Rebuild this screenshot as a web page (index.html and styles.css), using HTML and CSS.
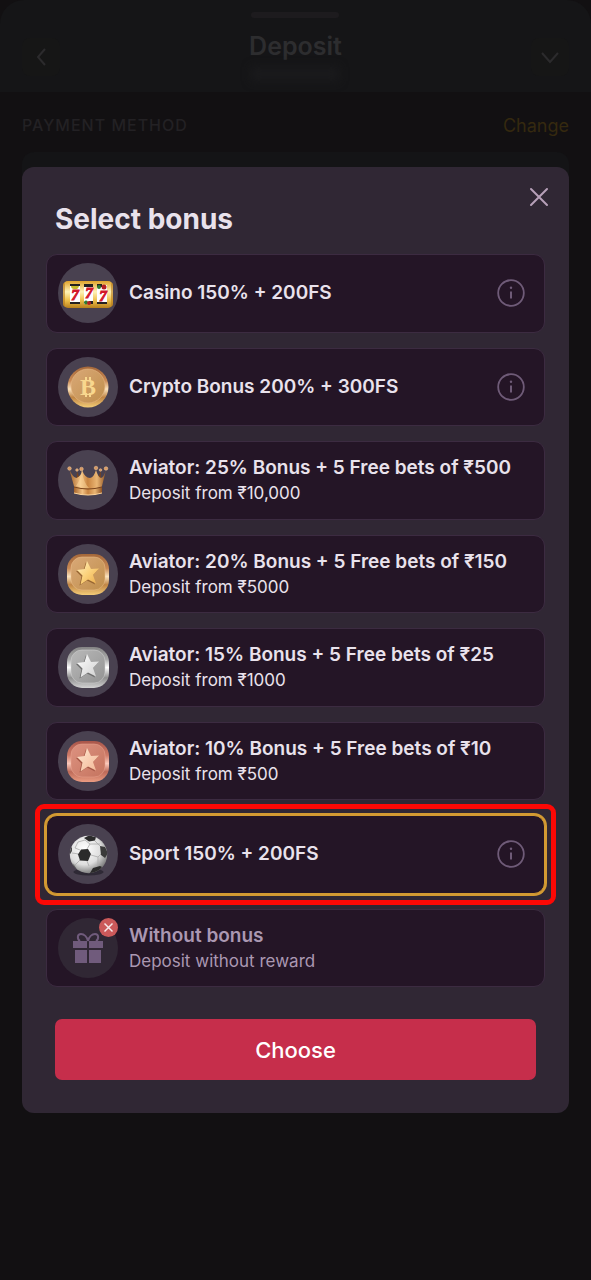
FILE: index.html
```html
<!DOCTYPE html>
<html lang="en">
<head>
    <meta charset="UTF-8">
    <meta name="viewport" content="width=device-width, initial-scale=1.0">
    <title>Deposit</title>
    <link rel="stylesheet" href="styles.css">
</head>
<body>
    <!-- Shared gradients and shapes -->
    <svg class="defs" width="0" height="0" aria-hidden="true">
        <defs>
            <linearGradient id="slotGold" x1="0" y1="0" x2="0" y2="1">
                <stop offset="0" stop-color="#e0a32a"/>
                <stop offset="0.4" stop-color="#fff3b8"/>
                <stop offset="0.7" stop-color="#f0c34e"/>
                <stop offset="1" stop-color="#b8801c"/>
            </linearGradient>
            <linearGradient id="goldRim" x1="0" y1="0" x2="0" y2="1">
                <stop offset="0" stop-color="#a4683a"/>
                <stop offset="0.35" stop-color="#c98a55"/>
                <stop offset="0.55" stop-color="#fbe3bd"/>
                <stop offset="0.75" stop-color="#c08544"/>
                <stop offset="1" stop-color="#f3cd78"/>
            </linearGradient>
            <linearGradient id="goldFace" x1="0" y1="0" x2="1" y2="1">
                <stop offset="0" stop-color="#d9a877"/>
                <stop offset="1" stop-color="#c08f4c"/>
            </linearGradient>
            <linearGradient id="goldStar" x1="0" y1="0" x2="1" y2="1">
                <stop offset="0" stop-color="#fff0c2"/>
                <stop offset="0.5" stop-color="#fbd27c"/>
                <stop offset="1" stop-color="#e9a94a"/>
            </linearGradient>
            <linearGradient id="silverRim" x1="0" y1="0" x2="0" y2="1">
                <stop offset="0" stop-color="#858585"/>
                <stop offset="0.3" stop-color="#a9a9a9"/>
                <stop offset="0.5" stop-color="#ffffff"/>
                <stop offset="0.75" stop-color="#8f8f8f"/>
                <stop offset="1" stop-color="#d2d2d2"/>
            </linearGradient>
            <linearGradient id="silverFace" x1="0" y1="0" x2="1" y2="1">
                <stop offset="0" stop-color="#b9b9b9"/>
                <stop offset="1" stop-color="#939393"/>
            </linearGradient>
            <linearGradient id="silverStar" x1="0" y1="0" x2="1" y2="1">
                <stop offset="0" stop-color="#ffffff"/>
                <stop offset="1" stop-color="#cfcfcf"/>
            </linearGradient>
            <linearGradient id="bronzeRim" x1="0" y1="0" x2="0" y2="1">
                <stop offset="0" stop-color="#a9564a"/>
                <stop offset="0.35" stop-color="#cf7c69"/>
                <stop offset="0.55" stop-color="#fbc9bb"/>
                <stop offset="0.75" stop-color="#bd6a58"/>
                <stop offset="1" stop-color="#ea9c82"/>
            </linearGradient>
            <linearGradient id="bronzeFace" x1="0" y1="0" x2="1" y2="1">
                <stop offset="0" stop-color="#dd9280"/>
                <stop offset="1" stop-color="#c5745f"/>
            </linearGradient>
            <linearGradient id="bronzeStar" x1="0" y1="0" x2="1" y2="1">
                <stop offset="0" stop-color="#ffe6d0"/>
                <stop offset="1" stop-color="#f2b795"/>
            </linearGradient>
            <linearGradient id="crownGold" x1="0" y1="0" x2="1" y2="0">
                <stop offset="0" stop-color="#a4622a"/>
                <stop offset="0.3" stop-color="#f3c284"/>
                <stop offset="0.5" stop-color="#c98440"/>
                <stop offset="0.75" stop-color="#eab674"/>
                <stop offset="1" stop-color="#8e5222"/>
            </linearGradient>
            <radialGradient id="ballShade" cx="0.4" cy="0.35" r="0.65">
                <stop offset="0" stop-color="#ffffff"/>
                <stop offset="0.65" stop-color="#dedede"/>
                <stop offset="1" stop-color="#858585"/>
            </radialGradient>
            <clipPath id="ballClip"><circle cx="30.500" cy="30.500" r="18.700"/></clipPath>
            <symbol id="star" viewBox="0 0 24 24">
                <path d="M11 0l4 8 8-.5-6 6.500 3 8.500-8-4-7.500 5 2-9L1 9l7.500-1z"/>
            </symbol>
            <symbol id="info" viewBox="0 0 28 28">
                <circle cx="14" cy="14" r="12.800" fill="none" stroke="currentColor" stroke-width="1.800"/>
                <path d="M14 12.500v7" stroke="currentColor" stroke-width="2"/>
                <circle cx="14" cy="8.700" r="1.200" fill="currentColor"/>
            </symbol>
        </defs>
    </svg>

    <!-- Deposit screen -->
    <div class="deposit">
        <header class="deposit-header">
            <button class="nav-btn" aria-label="Back">
                <svg width="20" height="20" viewBox="0 0 20 20"><path d="M14 2L7 10l7 8"/></svg>
            </button>
            <div class="header-center">
                <div class="grabber"></div>
                <h1>Deposit</h1>
                <div class="balance"></div>
            </div>
            <button class="nav-btn" aria-label="Collapse">
                <svg width="20" height="20" viewBox="0 0 20 20"><path d="M2 6l8 9 8-9"/></svg>
            </button>
        </header>
        <div class="method-row">
            <h2>PAYMENT METHOD</h2>
            <a href="#">Change</a>
        </div>
        <div class="method-card"></div>
    </div>

    <!-- Bonus dialog -->
    <div class="overlay">
        <form class="modal" role="dialog" aria-labelledby="modalTitle">
            <button type="button" class="close-btn" aria-label="Close">
                <svg width="20" height="20" viewBox="0 0 20 20"><path d="M2 2l16 16M18 2L2 18"/></svg>
            </button>
            <h2 class="modal-title" id="modalTitle">Select bonus</h2>

            <div class="bonus-list">
                <div class="bonus">
                    <input type="radio" name="bonus" id="casino">
                    <label for="casino">
                        <svg class="bonus-icon" viewBox="0 0 60 60">
                            <rect x="5" y="18" width="50" height="27" rx="5" fill="url(#slotGold)"/>
                            <rect x="5" y="20" width="2" height="23" rx="1" fill="#b67a1b" opacity="0.6"/>
                            <rect x="53" y="20" width="2" height="23" rx="1" fill="#b67a1b" opacity="0.6"/>
                            <rect x="12" y="22" width="10" height="19" fill="#fff"/>
                            <rect x="26" y="22" width="9" height="19" fill="#fff"/>
                            <rect x="39" y="22" width="10" height="19" fill="#fff"/>
                            <path d="M12 21h10v2H12zM26 21h9v3h-9zM39 21h5v3h-5zM12 39h10v2H12zM31 38h4v3h-4zM39 39h10v2H39z" fill="#242020"/>
                            <path d="M13 23h8q-1 4-5 3-3 0-3-3z" fill="#c5b92b"/>
                            <circle cx="46" cy="24" r="2.500" fill="#b41e22"/>
                            <circle cx="41" cy="24" r="2" fill="#2f7a31"/>
                            <circle cx="28" cy="39.500" r="2" fill="#2f7a31"/>
                            <circle cx="31" cy="40" r="2" fill="#b41e22"/>
                            <g class="sevens">
                                <text x="17" y="37">7</text>
                                <text x="31" y="35">7</text>
                                <text x="45" y="38">7</text>
                            </g>
                        </svg>
                        <span class="bonus-text"><span class="bonus-name">Casino 150% + 200FS</span></span>
                    </label>
                    <button type="button" class="info-btn" aria-label="About Casino bonus"><svg><use href="#info"/></svg></button>
                </div>

                <div class="bonus">
                    <input type="radio" name="bonus" id="crypto">
                    <label for="crypto">
                        <svg class="bonus-icon" viewBox="0 0 60 60">
                            <circle cx="30" cy="30" r="20.500" fill="url(#goldRim)"/>
                            <circle cx="30" cy="29" r="17" fill="url(#goldFace)" stroke="#e7b884" stroke-width="0.600"/>
                            <g class="coin-mark">
                                <path d="M28 20v4M32 20v4M28 36v4M32 36v4"/>
                                <text x="30" y="38">B</text>
                            </g>
                        </svg>
                        <span class="bonus-text"><span class="bonus-name">Crypto Bonus 200% + 300FS</span></span>
                    </label>
                    <button type="button" class="info-btn" aria-label="About Crypto bonus"><svg><use href="#info"/></svg></button>
                </div>

                <div class="bonus">
                    <input type="radio" name="bonus" id="aviator25">
                    <label for="aviator25">
                        <svg class="bonus-icon" viewBox="0 0 60 60">
                            <path d="M19 21l3 9h17l4-9-1 18H18z" fill="#7b431b"/>
                            <path d="M11.500 20q3 7 7 8 5-2 5.500-8 3 8 8 8 4-1 6-8 2 7 5 8 3-1 5-8l-4.500 18q-13 5-27 0z" fill="url(#crownGold)"/>
                            <path d="M24 20q-1 9-6 16 8 3 13 2-6-6-7-18z" fill="#ffdda4" opacity="0.450"/>
                            <path d="M16 37q14 4 28 0v6q-14 4-28 0z" fill="url(#crownGold)"/>
                            <path d="M16 37q14 4 28 0" fill="none" stroke="#7a441c" stroke-width="1"/>
                            <path d="M16 43q14 4 28 0" fill="none" stroke="#ffd69b" stroke-width="1"/>
                            <g fill="#d89a62" stroke="#f6cda0" stroke-width="0.500">
                                <circle cx="11.500" cy="18.500" r="1.800"/><circle cx="23.500" cy="19" r="1.800"/><circle cx="38" cy="18" r="1.800"/>
                                <circle cx="48" cy="18.500" r="1.800"/><circle cx="19" cy="20" r="1.300"/><circle cx="42.500" cy="20" r="1.300"/>
                            </g>
                        </svg>
                        <span class="bonus-text">
                            <span class="bonus-name">Aviator: 25% Bonus + 5 Free bets of ₹500</span>
                            <span class="bonus-note">Deposit from ₹10,000</span>
                        </span>
                    </label>
                </div>

                <div class="bonus">
                    <input type="radio" name="bonus" id="aviator20">
                    <label for="aviator20">
                        <svg class="bonus-icon" viewBox="0 0 60 60">
                            <rect x="9" y="10" width="42" height="41" rx="15" fill="url(#goldRim)"/>
                            <rect x="13" y="13" width="34" height="33" rx="11" fill="url(#goldFace)" stroke="#ecc18c" stroke-width="0.500"/>
                            <use href="#star" x="17" y="18" width="24" height="24" fill="#966431"/>
                            <use href="#star" x="18" y="17" width="24" height="24" fill="url(#goldStar)"/>
                        </svg>
                        <span class="bonus-text">
                            <span class="bonus-name">Aviator: 20% Bonus + 5 Free bets of ₹150</span>
                            <span class="bonus-note">Deposit from ₹5000</span>
                        </span>
                    </label>
                </div>

                <div class="bonus">
                    <input type="radio" name="bonus" id="aviator15">
                    <label for="aviator15">
                        <svg class="bonus-icon" viewBox="0 0 60 60">
                            <rect x="9" y="10" width="42" height="41" rx="15" fill="url(#silverRim)"/>
                            <rect x="13" y="13" width="34" height="33" rx="11" fill="url(#silverFace)" stroke="#d4d4d4" stroke-width="0.500"/>
                            <use href="#star" x="17" y="18" width="24" height="24" fill="#6d6d6d"/>
                            <use href="#star" x="18" y="17" width="24" height="24" fill="url(#silverStar)"/>
                        </svg>
                        <span class="bonus-text">
                            <span class="bonus-name">Aviator: 15% Bonus + 5 Free bets of ₹25</span>
                            <span class="bonus-note">Deposit from ₹1000</span>
                        </span>
                    </label>
                </div>

                <div class="bonus">
                    <input type="radio" name="bonus" id="aviator10">
                    <label for="aviator10">
                        <svg class="bonus-icon" viewBox="0 0 60 60">
                            <rect x="9" y="10" width="42" height="41" rx="15" fill="url(#bronzeRim)"/>
                            <rect x="13" y="13" width="34" height="33" rx="11" fill="url(#bronzeFace)" stroke="#eba793" stroke-width="0.500"/>
                            <use href="#star" x="17" y="18" width="24" height="24" fill="#a35645"/>
                            <use href="#star" x="18" y="17" width="24" height="24" fill="url(#bronzeStar)"/>
                        </svg>
                        <span class="bonus-text">
                            <span class="bonus-name">Aviator: 10% Bonus + 5 Free bets of ₹10</span>
                            <span class="bonus-note">Deposit from ₹500</span>
                        </span>
                    </label>
                </div>

                <div class="bonus selected">
                    <input type="radio" name="bonus" id="sport" checked>
                    <label for="sport">
                        <svg class="bonus-icon" viewBox="0 0 60 60">
                            <ellipse cx="30.500" cy="48" rx="15" ry="3.500" fill="#242029" opacity="0.700"/>
                            <circle cx="30.500" cy="30.500" r="18.700" fill="url(#ballShade)"/>
                            <g clip-path="url(#ballClip)">
                                <path d="M29 25l3-5 10 0M32 20l-5-4-7 2-3 6 5 2M33 31l7 2 3-3M40 33l0 8-3 3M29 37l2 5M22 36l-5 5-4-2M17 41l3 6M21 30l-7-1M37 17l5 5" fill="none" stroke="#a9a9a9" stroke-width="0.800"/>
                                <path d="M23 25.500l7-.5 3 5-3 7-8-.5-2-6z" fill="#2b2b2b"/>
                                <path d="M26 14l5-2.500 7 1.500-1 3.500-6 1z" fill="#2b2b2b"/>
                                <path d="M42 22l5 1 3 6-3 5-4-3z" fill="#3a3a3a"/>
                                <path d="M35 44l7-2 2 1-4 6-8 0z" fill="#2b2b2b"/>
                                <path d="M11 25l3-2 0 4-3 5zM12 38l4 3 4 6-5-2z" fill="#4a4a4a"/>
                            </g>
                        </svg>
                        <span class="bonus-text"><span class="bonus-name">Sport 150% + 200FS</span></span>
                    </label>
                    <button type="button" class="info-btn" aria-label="About Sport bonus"><svg><use href="#info"/></svg></button>
                </div>

                <div class="bonus without">
                    <input type="radio" name="bonus" id="without">
                    <label for="without">
                        <svg class="bonus-icon" viewBox="0 0 60 60">
                            <path d="M15 23h14v7H15zM31 23h14v7H31zM17 32h12v13H17zM31 32h12v13H31z" fill="#705b7c"/>
                            <path d="M30 23c-1-4-4-7-7-7-4 0-4 5-1 7M30 23c1-4 4-7 7-7 4 0 4 5 1 7" fill="none" stroke="#705b7c" stroke-width="2"/>
                            <circle cx="50.500" cy="9.500" r="9.500" fill="#cb595a"/>
                            <path d="M46.500 5.500l8 8M54.500 5.500l-8 8" stroke="#f6e8ea" stroke-width="1.500"/>
                        </svg>
                        <span class="bonus-text">
                            <span class="bonus-name">Without bonus</span>
                            <span class="bonus-note">Deposit without reward</span>
                        </span>
                    </label>
                </div>
            </div>

            <button type="submit" class="choose-btn">Choose</button>
        </form>
    </div>
</body>
</html>
```
FILE: styles.css
```css
* {
    box-sizing: border-box;
}

body {
    margin: 0;
    min-height: 100vh;
    background: #121012;
    color: #e9e2ec;
    font-family: Inter, "Liberation Sans", sans-serif;
}

h1, h2 {
    margin: 0;
}

button {
    padding: 0;
    border: none;
    background: none;
    font-family: inherit;
    cursor: pointer;
}

.defs {
    position: absolute;
}

/* Deposit screen */
.deposit-header {
    display: flex;
    justify-content: space-between;
    height: 92px;
    padding: 12px 22px 0;
    border-radius: 24px 24px 0 0;
    background: #151517;
}

.nav-btn {
    display: grid;
    place-items: center;
    width: 38px;
    height: 38px;
    margin-top: 26px;
    border-radius: 8px;
    background: #161616;
}

.nav-btn svg {
    fill: none;
    stroke: #2c2b2d;
    stroke-width: 2;
}

.header-center {
    display: flex;
    flex-direction: column;
    align-items: center;
}

.grabber {
    width: 88px;
    height: 6px;
    border-radius: 3px;
    background: #1d1b1e;
}

.deposit-header h1 {
    margin-top: 12px;
    color: #2d2d2f;
    font-size: 25px;
    font-weight: 600;
    line-height: 32px;
}

.balance {
    width: 88px;
    height: 14px;
    margin-top: 5px;
    background: #1a1a1c;
    filter: blur(5px);
}

.method-row {
    display: flex;
    align-items: center;
    justify-content: space-between;
    height: 60px;
    padding: 6px 22px 0;
}

.method-row h2 {
    color: #232124;
    font-size: 16px;
    font-weight: 500;
    letter-spacing: 1px;
}

.method-row a {
    color: #35290f;
    font-size: 18px;
    text-decoration: none;
}

.method-card {
    height: 80px;
    margin: 0 22px;
    border-radius: 12px;
    background: #141416;
}

/* Bonus dialog */
.overlay {
    position: absolute;
    inset: 0;
    display: flex;
    align-items: center;
    padding: 0 22px;
}

.modal {
    position: relative;
    flex: 1;
    padding: 36px 24px 33px;
    border-radius: 12px;
    background: #302734;
}

.close-btn {
    position: absolute;
    top: 20px;
    right: 20px;
    width: 20px;
    height: 20px;
}

.close-btn svg {
    display: block;
    fill: none;
    stroke: #b7a0b9;
    stroke-width: 2;
    stroke-linecap: round;
}

.modal-title {
    margin: 0 9px 19px;
    font-size: 28px;
    font-weight: 700;
    line-height: 32px;
}

.bonus-list {
    display: grid;
    grid-auto-rows: 1fr;
    gap: 15px;
    min-height: 733px;
}

.bonus {
    position: relative;
    display: flex;
    align-items: center;
    padding: 0 19px 0 11px;
    border: 1px solid #3c2b41;
    border-radius: 11px;
    background: #241526;
}

.bonus input {
    position: absolute;
    opacity: 0;
}

.bonus label {
    flex: 1;
    display: flex;
    align-items: center;
    gap: 11px;
    cursor: pointer;
}

.bonus-icon {
    flex: none;
    width: 60px;
    height: 60px;
    border-radius: 50%;
    background: #494150;
}

.bonus-text {
    display: flex;
    flex-direction: column;
}

.bonus-name {
    font-size: 19px;
    font-weight: 600;
    line-height: 26px;
}

.bonus-note {
    font-size: 17px;
    line-height: 24px;
}

.info-btn {
    width: 28px;
    height: 28px;
    color: #6f5b78;
}

.info-btn svg {
    display: block;
    width: 28px;
    height: 28px;
}

.bonus.selected {
    border-color: #d39a32;
    box-shadow: 0 0 0 2px #d39a32;
}

.bonus.selected::after {
    content: "";
    position: absolute;
    inset: -12px;
    border: 5px solid #fd0805;
    border-radius: 9px;
    pointer-events: none;
}

.bonus.without {
    color: #ab98b2;
}

.without .bonus-icon {
    overflow: visible;
    background: #302734;
}

.sevens {
    fill: #d3192b;
    stroke: #d3192b;
    stroke-width: 1;
    font-family: "Liberation Serif", serif;
    font-size: 15px;
    font-weight: 700;
    font-style: italic;
    text-anchor: middle;
}

.coin-mark {
    fill: #f8d78e;
    stroke: #f8d78e;
    font-family: "Liberation Serif", serif;
    font-size: 24px;
    font-weight: 700;
    text-anchor: middle;
}

.coin-mark path {
    stroke-width: 2;
}

.coin-mark text {
    stroke: none;
}

.choose-btn {
    display: block;
    width: calc(100% - 18px);
    height: 61px;
    margin: 32px 9px 0;
    border-radius: 7px;
    background: #c62e4b;
    color: #fff;
    font-size: 22px;
    font-weight: 500;
}
```
